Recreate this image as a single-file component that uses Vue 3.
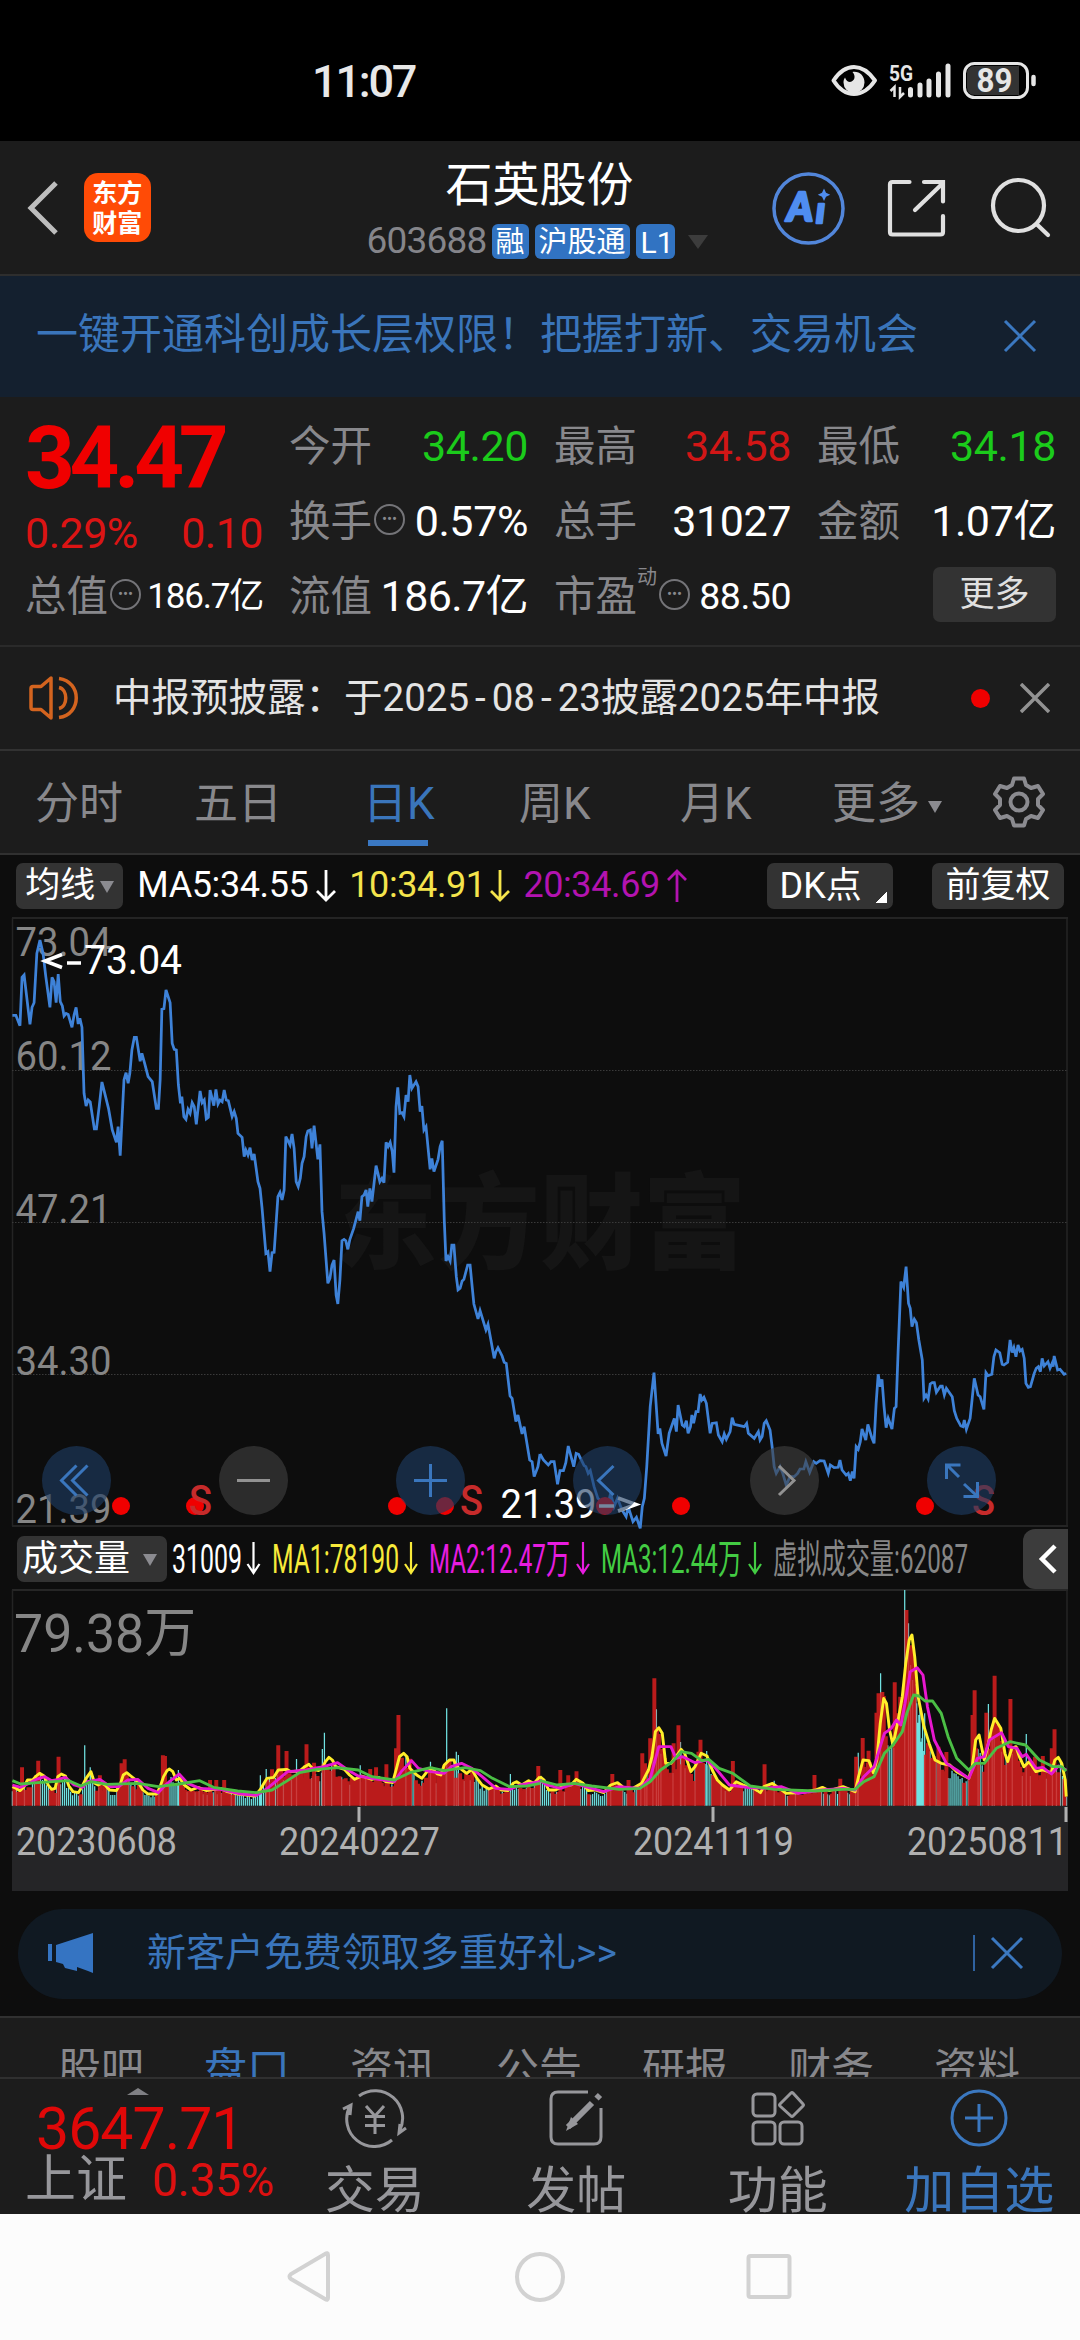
<script setup>
const quoteRows = [
  { label: '今开', value: '34.20', tone: 'down' },
  { label: '最高', value: '34.58', tone: 'up' },
  { label: '最低', value: '34.18', tone: 'down' },
  { label: '换手', value: '0.57%', info: true },
  { label: '总手', value: '31027' },
  { label: '金额', value: '1.07亿' },
]

const sections = ['股吧', '盘口', '资讯', '公告', '研报', '财务', '资料']

const priceLevels = [
  { text: '73.04', y: 956 },
  { text: '60.12', y: 1070 },
  { text: '47.21', y: 1223 },
  { text: '34.30', y: 1375 },
  { text: '21.39', y: 1523 },
]

const eventDots = [121, 195, 397, 445, 605, 681, 925]
const sellMarks = [189, 460, 972]

const volumeLegend = [
  { text: '31009', x: 172, w: 70, arrow: 253.5, color: '#ffffff' },
  { text: 'MA1:78190', x: 272, w: 127, arrow: 411, color: '#f8ea3a' },
  { text: 'MA2:12.47万', x: 429, w: 141, arrow: 583, color: '#e81ce0' },
  { text: 'MA3:12.44万', x: 601, w: 141, arrow: 755, color: '#43cc43' },
  { text: '虚拟成交量:62087', x: 773, w: 195, color: '#868686' },
]

const dates = [
  { text: '20230608', x: 16 },
  { text: '20240227', x: 279, tick: 359 },
  { text: '20241119', x: 633, tick: 713 },
  { text: '20250811', x: 907, tick: 1066 },
]

// The curves are stored as two halves on a 3136-unit wide grid.
const HALF = 1568
const priceLeft = '36,346 46,346 58,377 64,232 70,225 87,373 93,322 99,308 107,160 116,120 125,160 133,230 145,322 151,232 157,245 163,308 169,222 175,305 181,318 186,348 192,340 198,343 209,382 215,345 221,322 227,372 232,355 238,382 244,580 250,618 256,600 262,606 274,687 280,687 288,620 296,546 315,625 326,690 338,727 343,680 349,767 360,540 366,518 372,550 377,520 383,450 390,412 396,412 407,484 412,460 420,490 430,530 442,545 454,625 460,625 465,540 470,328 476,326 482,270 494,308 500,430 506,448 512,450 518,555 524,610 528,590 534,650 540,658 546,628 552,640 558,608 564,620 570,673 581,573 587,608 593,600 599,657 605,652 610,570 621,617 627,568 633,612 639,600 645,605 651,570 657,600 663,602 674,650 680,635 686,655 691,700 703,712 709,770 714,750 720,765 726,743 732,780 738,762 749,845 755,865 761,925 772,1060 778,1055 784,1115 790,1058 796,1057 807,890 813,877 819,900 825,870 830,710 842,735 848,702 854,745 860,845 866,860 872,835 877,790 883,770 889,710 894,693 901,690 906,745 912,677 923,778 929,733 935,935 941,1000 952,1150 958,1135 964,1095 970,1080 976,1185 981,1212 987,1140 993,1022 999,1018 1004,1022 1010,1048 1016,1018 1027,985 1040,935 1045,962 1051,890 1057,885 1063,870 1068,920 1074,865 1080,905 1092,797 1103,845 1109,835 1115,848 1121,727 1127,740 1133,727 1139,755 1144,818 1150,620 1155,562 1161,640 1167,638 1173,650 1179,585 1185,605 1190,525 1196,565 1208,545 1214,560 1220,635 1225,618 1231,690 1237,680 1249,808 1254,775 1260,815 1272,778 1278,740 1284,722 1290,960 1295,1083 1301,1070 1307,1083 1312,1035 1318,1035 1325,1130 1330,1170 1336,1165 1342,1143 1347,1138 1358,1095 1365,1095 1371,1160 1376,1212 1388,1257 1394,1232 1411,1290 1417,1273 1435,1375 1440,1355 1446,1343 1458,1368 1464,1387 1470,1390 1481,1488 1487,1495 1498,1565 1504,1545 1516,1602 1522,1580 1538,1680 1545,1685 1551,1730 1562,1700 1568,1662'
const priceRight = '0,522 10,540 24,555 32,545 41,545 51,613 58,572 68,572 75,548 82,498 98,560 105,520 112,523 128,557 133,560 140,580 146,572 157,620 168,655 182,668 196,680 205,640 215,680 225,655 238,690 250,710 256,680 270,725 280,712 291,745 297,680 303,655 310,560 320,380 331,278 343,462 348,445 354,490 366,528 375,460 390,415 396,455 401,375 413,435 419,440 425,422 430,460 437,440 441,405 446,430 453,395 459,395 465,342 470,360 476,352 483,370 494,460 500,430 512,428 518,465 529,485 535,462 541,478 552,455 558,413 564,433 580,437 593,440 600,430 605,460 622,475 634,455 639,480 645,470 651,430 657,422 668,450 674,500 680,560 686,580 697,560 705,580 715,615 726,590 738,590 748,580 755,567 766,567 772,545 783,577 795,545 802,550 813,542 825,543 837,580 843,555 854,563 866,562 871,540 877,570 889,585 895,580 901,602 907,575 912,595 918,500 924,508 930,485 935,447 946,480 952,433 964,475 970,490 976,370 982,283 988,320 993,298 999,380 1005,443 1011,415 1022,447 1029,385 1034,380 1040,210 1048,5 1056,22 1063,-40 1070,70 1075,85 1080,140 1087,118 1093,128 1100,180 1110,240 1115,355 1121,345 1127,357 1133,312 1139,308 1145,308 1151,337 1163,318 1168,318 1174,345 1180,325 1197,350 1203,392 1210,415 1222,438 1228,440 1232,420 1238,448 1249,415 1255,355 1261,295 1272,345 1278,350 1289,388 1295,278 1301,287 1312,283 1318,230 1324,210 1335,218 1342,253 1347,255 1358,247 1365,180 1371,218 1376,203 1382,230 1388,195 1394,213 1400,208 1406,235 1411,310 1418,322 1424,320 1435,280 1441,265 1447,260 1453,275 1458,235 1464,258 1475,245 1481,265 1487,250 1490,260 1493,228 1503,270 1510,268 1522,283 1528,280'

const ma1Left = '36,650 46,655 58,662 70,650 80,630 95,630 105,618 115,610 128,618 140,645 150,658 160,655 168,620 178,612 190,618 200,648 212,665 228,668 238,650 250,625 264,605 275,640 285,645 295,640 305,645 318,660 338,662 350,640 358,615 368,608 380,618 392,628 402,638 415,660 430,672 455,672 465,650 475,620 485,602 492,597 502,605 512,630 522,625 535,645 555,660 575,652 600,662 640,655 660,665 690,672 740,678 755,660 775,625 795,622 808,600 832,598 845,605 870,603 885,590 897,583 910,598 925,602 935,595 945,575 955,562 965,570 975,590 1000,598 1015,615 1030,628 1050,618 1080,628 1100,622 1120,635 1140,638 1150,600 1160,560 1172,550 1182,560 1190,595 1210,615 1225,625 1240,605 1255,595 1270,612 1280,615 1290,585 1305,570 1318,570 1325,590 1340,598 1355,610 1370,598 1385,625 1400,645 1420,657 1440,648 1455,660 1475,662 1490,640 1500,635 1515,645 1535,632 1550,640 1568,620'
const ma1Right = '0,620 12,630 25,660 45,660 75,645 90,645 105,628 125,640 140,662 160,660 185,668 205,645 225,638 245,655 270,655 295,640 315,600 325,560 335,485 345,473 355,490 365,580 380,580 395,560 410,538 420,550 438,605 450,590 468,550 485,558 500,600 515,630 530,645 550,660 570,635 590,645 620,655 640,668 650,650 675,640 695,655 715,670 760,668 800,660 820,652 840,662 880,650 915,665 925,620 938,570 955,572 968,608 978,570 988,460 998,385 1006,400 1015,480 1025,525 1040,450 1052,380 1062,280 1072,210 1080,195 1088,260 1098,380 1115,470 1130,520 1147,570 1165,580 1190,585 1210,605 1245,625 1255,590 1265,510 1275,495 1282,530 1290,570 1300,530 1310,480 1320,445 1338,475 1350,550 1358,575 1370,535 1382,530 1392,560 1405,590 1420,575 1440,605 1460,600 1485,608 1495,570 1505,562 1515,580 1525,630 1528,680'
const ma2Left = '36,645 60,652 85,640 105,628 130,620 150,632 170,628 190,622 215,645 240,652 255,635 290,628 320,650 345,650 370,630 400,628 430,655 460,668 480,645 520,612 545,640 580,655 640,658 700,672 745,676 770,660 800,635 835,605 860,603 890,600 910,595 940,590 980,578 1010,600 1040,618 1080,625 1145,635 1165,605 1195,572 1215,595 1250,605 1290,610 1310,590 1340,580 1370,595 1400,620 1440,655 1480,658 1510,645 1568,635'
const ma2Right = '0,630 20,645 60,655 100,640 140,652 185,665 230,650 290,655 320,625 345,530 380,530 395,565 415,560 450,578 485,570 510,595 550,645 600,652 650,655 700,650 750,670 820,660 880,655 915,660 940,620 970,590 1000,490 1020,475 1035,450 1048,465 1060,400 1075,305 1095,293 1112,315 1125,410 1145,510 1180,580 1210,600 1245,625 1270,565 1290,560 1305,510 1340,488 1360,530 1385,535 1400,560 1412,553 1440,595 1460,592 1485,612 1505,588 1528,600'
const ma3Left = '36,632 60,642 110,638 200,632 235,648 265,635 310,643 400,640 460,650 520,642 580,632 620,652 690,663 745,668 790,660 830,635 870,608 920,598 980,593 1040,600 1080,620 1145,630 1190,608 1250,593 1290,602 1350,593 1395,602 1430,625 1480,650 1530,648 1568,640'
const ma3Right = '0,632 50,645 100,640 150,648 230,658 290,655 320,635 350,600 385,575 410,545 440,550 470,572 490,568 520,595 560,610 610,648 680,658 800,663 880,658 915,658 940,635 970,620 1000,550 1025,525 1052,485 1065,430 1085,375 1100,378 1118,393 1140,393 1165,430 1185,500 1210,565 1245,600 1265,580 1290,580 1325,535 1365,515 1410,525 1450,570 1490,590 1515,590 1528,603'

const averages = [
  { left: ma1Left, right: ma1Right, color: '#ffee2a' },
  { left: ma2Left, right: ma2Right, color: '#e817d0' },
  { left: ma3Left, right: ma3Right, color: '#4bbf45' },
]

// Outstanding volume days: x position -> top of the bar.
const redPeaks = [
  [64, 592], [111, 572], [170, 560], [353, 580], [362, 568], [473, 556], [479, 558], [290, 616], [610, 630], [628, 630], [651, 630],
  [790, 598], [808, 526], [832, 543], [890, 523], [912, 578], [1075, 597], [1092, 592], [1122, 583], [1150, 535], [1157, 435], [1190, 566],
  [1305, 572], [1563, 588], [1627, 600], [1650, 616], [1674, 604], [1778, 612], [1825, 630], [1865, 550], [1873, 580], [1888, 505], [1900, 325], [1918, 560], [1956, 520],
  [1970, 466], [2034, 509], [2028, 545], [2128, 573], [2220, 583], [2365, 615], [2440, 626], [2486, 560], [2505, 504], [2522, 542],
  [2545, 428], [2551, 370], [2562, 366], [2598, 337], [2614, 380], [2606, 430], [2632, 120], [2655, 348], [2725, 530], [2748, 546],
  [2824, 435], [2830, 361], [2864, 428], [2888, 317], [2880, 480], [2898, 470], [2934, 387], [3005, 560], [3028, 558], [3062, 478], [3054, 535],
]
const cyanPeaks = [
  [246, 526], [262, 592], [518, 600], [756, 616], [773, 597], [861, 567], [936, 537], [942, 488], [1046, 586], [1250, 575],
  [1297, 415], [1325, 545], [1331, 555], [1482, 612], [1906, 418], [1912, 545], [1976, 516], [2052, 543], [2248, 632], [2492, 548], [2557, 310],
  [2627, 60], [2638, 160], [2644, 285], [2650, 330], [2662, 400], [2668, 435], [2674, 515], [2679, 460], [2685, 430], [2840, 538], [2870, 402],
  [2908, 545], [2980, 492],
]
const cyanRuns = [
  [120, 142], [175, 210], [238, 280], [305, 335], [415, 452], [487, 525], [697, 772], [1372, 1410], [1480, 1510],
  [1568, 1590], [1683, 1708], [1718, 1763], [1803, 1818], [2050, 2066], [2158, 2188], [2660, 2686], [2758, 2793], [2846, 2856],
]

const parse = (text) => text.split(' ').map((p) => p.split(',').map(Number))
const trend = [...parse(ma1Left), ...parse(ma1Right).map(([x, y]) => [x + HALF, y])]

function trendAt(x) {
  const i = trend.findIndex((p) => p[0] > x)
  if (i < 1) return trend[trend.length - 1][1]
  const [x0, y0] = trend[i - 1]
  const [x1, y1] = trend[i]
  return y0 + ((y1 - y0) * (x - x0)) / (x1 - x0 || 1)
}

function buildBars() {
  const red = []
  const cyan = []
  let seed = 17
  const next = () => (seed = (seed * 16807) % 2147483647) / 2147483647
  for (let i = 0; i < 526; i++) {
    const x = 36 + i * 5.83
    const isCyan = cyanRuns.some(([a, b]) => x >= a && x <= b) || next() < 0.3
    const top = 707 - (707 - trendAt(x)) * (0.66 + next() * 0.38)
    if (isCyan) cyan.push([x, top])
    else red.push([x, top])
  }
  const toPath = (list) => list.map(([x, y]) => `M${x.toFixed(1)} 707V${y.toFixed(0)}`).join('')
  return { red: toPath([...red, ...redPeaks]), cyan: toPath([...cyan, ...cyanPeaks]) }
}

const bars = buildBars()
</script>

<template>
  <main class="phone">
    <header class="status">
      <span class="clock">11:07</span>
      <svg class="status-icons" width="210" height="42" viewBox="828 60 210 42">
        <path d="M833.500 80.500Q842.500 67 854 67T875 80.500Q866 94 854 94T833.500 80.500Z" fill="none" stroke="#e6e6e6" stroke-width="4" stroke-linejoin="round" />
        <path d="M852.500 72c7-1 12 4 12 10.500a10.500 10.500 0 0 1-21 0c0-2 .5-3.500 1.500-5 1 3 3 4.500 5 4.500 5-1 6-6 2.500-10z" fill="#e6e6e6" />
        <text x="889" y="80.500" font-size="22" font-weight="700" textLength="24" lengthAdjust="spacingAndGlyphs" fill="#e6e6e6">5G</text>
        <path d="M894.500 97V87l-4 4M900 87v10l4-4" fill="none" stroke="#e6e6e6" stroke-width="2.500" />
        <path d="M910.500 95V89.500M920 95V85M929 95V81M938.500 95V74M948 95V66" stroke="#e6e6e6" stroke-width="5" stroke-linecap="round" />
        <rect x="964.500" y="63.500" width="63" height="34" rx="10" fill="none" stroke="#e6e6e6" stroke-width="3" />
        <path d="M975 66h44v29h-44q-8 0-8-8V74q0-8 8-8z" fill="#333" />
        <path d="M1033.500 77v7" stroke="#e6e6e6" stroke-width="4.500" stroke-linecap="round" />
        <text x="976.500" y="92" font-size="33" font-weight="700" textLength="36" lengthAdjust="spacingAndGlyphs" fill="#e6e6e6">89</text>
      </svg>
    </header>

    <section class="titlebar">
      <svg class="back" width="36" height="58" viewBox="0 0 36 58"><path d="M31 4 6 29l25 25" fill="none" stroke="#bdbdbd" stroke-width="5" /></svg>
      <div class="logo"><span>东方</span><span>财富</span></div>
      <div class="stock">
        <h1>石英股份</h1>
        <div class="codes">
          <span class="code">603688</span>
          <span class="tag">融</span><span class="tag">沪股通</span><span class="tag l1">L1</span>
          <i class="caret dim"></i>
        </div>
      </div>
      <svg class="tools" width="284" height="80" viewBox="768 168 284 80" fill="none">
        <circle cx="808.500" cy="208.500" r="34.500" stroke="#5286da" stroke-width="3.500" />
        <g fill="#4f8df0" stroke="#4f8df0" stroke-width="2.500" stroke-linejoin="round" font-family="Lato" font-weight="900" font-style="italic">
          <text x="787" y="221" font-size="40" textLength="26" lengthAdjust="spacingAndGlyphs">A</text>
          <text x="816" y="222.500" font-size="36">ı</text>
          <path d="m824 188.500 2 4.200 4.200 2-4.200 2-2 4.300-2-4.300-4.200-2 4.200-2z" stroke="none" />
        </g>
        <path d="M909.500 182H892.500q-2.500 0-2.500 2.500V232q0 2.500 2.500 2.500h48q2.500 0 2.500-2.500V216M915 210l27-26M924 182h19v19.500" stroke="#e0e0e0" stroke-width="4.200" stroke-linecap="round" />
        <circle cx="1018.500" cy="205.500" r="25.500" stroke="#e0e0e0" stroke-width="4.200" />
        <path d="m1036.500 224 11.500 11" stroke="#e0e0e0" stroke-width="4.200" stroke-linecap="round" />
      </svg>
    </section>

    <section class="banner">
      <span>一键开通科创成长层权限！把握打新、交易机会</span>
      <svg width="34" height="34" viewBox="0 0 34 34"><path d="m2 2 30 30M32 2 2 32" stroke="#3b78c0" stroke-width="3" /></svg>
    </section>

    <section class="quote">
      <div class="headline">
        <strong>34.47</strong>
        <p><span>0.29%</span><span>0.10</span></p>
      </div>
      <div v-for="row in quoteRows" :key="row.label" class="cell">
        <label>{{ row.label }}</label>
        <i v-if="row.info" class="info">•••</i>
        <b :class="row.tone">{{ row.value }}</b>
      </div>
      <div class="cell">
        <label>总值</label><i class="info">•••</i><b class="small">186.7亿</b>
      </div>
      <div class="cell"><label>流值</label><b class="tight">186.7亿</b></div>
      <div class="cell">
        <label>市盈</label><sup>动</sup><i class="info">•••</i><b class="ratio">88.50</b>
      </div>
      <div class="cell end"><button>更多</button></div>
    </section>

    <section class="notice">
      <svg width="52" height="46" viewBox="0 0 52 46" fill="none" stroke="#d4641f" stroke-width="3.500">
        <path d="M2 13.500q0-2 2-2h8L22 3v40L12 34.500H4q-2 0-2-2z" stroke-linejoin="round" />
        <path d="M30 12.500c9 2 9 19 0 21M30 3.500c23 3 23 36 0 39" />
      </svg>
      <p>中报预披露：于2025<i>-</i>08<i>-</i>23披露2025年中报</p>
      <span class="dot"></span>
      <svg width="30" height="30" viewBox="0 0 30 30"><path d="m1 1 28 28M29 1 1 29" stroke="#929292" stroke-width="3.500" /></svg>
    </section>

    <nav class="periods">
      <a>分时</a>
      <a>五日</a>
      <a class="active">日K</a>
      <a>周K</a>
      <a>月K</a>
      <a>更多<i class="caret small-caret"></i></a>
      <svg width="54" height="54" viewBox="-27 -27 54 54" fill="none" stroke="#8b8b90" stroke-width="4" stroke-linejoin="round">
        <path d="M-5-23.500H5L7-17 12-14 19-16 24-8 19-3V3L24 8 19 16 12 14 7 17 5 23.500H-5L-7 17-12 14-19 16-24 8-19 3V-3L-24-8-19-16-12-14-7-17Z" />
        <circle r="8.500" />
      </svg>
    </nav>

    <section class="mabar">
      <button class="avg">均线<i class="caret small-caret"></i></button>
      <span class="ma white">MA5:34.55</span><svg class="arrow" width="22" height="34" viewBox="-11 0 22 34"><path d="M0 1v30M-9 22l9 9 9-9" stroke="#fff" /></svg>
      <span class="ma yellow">10:34.91</span><svg class="arrow" width="22" height="34" viewBox="-11 0 22 34"><path d="M0 1v30M-9 22l9 9 9-9" stroke="#f4e44c" /></svg>
      <span class="ma purple">20:34.69</span><svg class="arrow" width="22" height="34" viewBox="-11 0 22 34"><path d="M0 33V2M-9 11l9-9 9 9" stroke="#b313b0" /></svg>
      <button class="dk">DK点<i class="corner"></i></button>
      <button class="adj">前复权</button>
    </section>

    <svg class="chart" width="1080" height="612" viewBox="0 917 1080 612" fill="none">
      <g font-family="'Noto Sans CJK SC'" font-weight="900" font-size="104" fill="#151515">
        <text x="334" y="1261" textLength="412" lengthAdjust="spacingAndGlyphs">东方财富</text>
      </g>
      <path d="M12.500 918V1526M1067 918V1526" stroke="#242424" stroke-width="1.500" />
      <path d="M12 918H1068M12 1526H1068" stroke="#242424" stroke-width="2" />
      <path d="M12 1070.500H1067M12 1222.500H1067M12 1374.500H1067" stroke="#3a3a3a" stroke-width="1" stroke-dasharray="1.500 1.500" />
      <g fill="#868686" font-size="40">
        <text v-for="l in priceLevels" :key="l.text" x="15.500" :y="l.y" textLength="96" lengthAdjust="spacingAndGlyphs">{{ l.text }}</text>
      </g>
      <g transform="translate(0 900) scale(.34439 .33333)" stroke="#3e82d8" stroke-width="8" stroke-linejoin="miter">
        <polyline :points="priceLeft" />
        <polyline :points="priceRight" transform="translate(1568 1140)" />
      </g>
      <g fill="#fff" font-size="40">
        <path d="M62 954.500 45 961l17 6.500M67 963h14" fill="none" stroke="#fff" stroke-width="3.500" />
        <text x="84" y="974" textLength="98" lengthAdjust="spacingAndGlyphs">73.04</text>
        <text x="500.500" y="1518" textLength="96" lengthAdjust="spacingAndGlyphs">21.39</text>
      </g>
      <circle v-for="x in eventDots" :key="x" :cx="x" cy="1506" r="9" fill="#f00000" />
      <path d="M599 1506h15M618 1498l18 6.500-18 6.500" stroke="#fff" stroke-width="3.500" />
      <g fill="#c62b2b" font-size="42" font-weight="500">
        <text v-for="x in sellMarks" :key="x" :x="x" y="1515" textLength="23" lengthAdjust="spacingAndGlyphs">S</text>
      </g>
      <g fill="#1e3d64" fill-opacity=".62">
        <circle v-for="x in [76.5, 430.5, 607.5, 961.5]" :key="x" :cx="x" cy="1480.500" r="34.500" />
        <circle v-for="x in [253.5, 784.5]" :key="x" :cx="x" cy="1480.500" r="34.500" fill="#414141" />
      </g>
      <g stroke="#3a76bd" stroke-width="3">
        <path d="M76.500 1465.500l-15 15 15 15M87.500 1465.500l-15 15 15 15" />
        <path d="M414 1480.500h33M430.500 1464v33" />
        <path d="M613.500 1466l-15 14.500 15 14.500" />
        <path d="M959 1477l-12-12M946.500 1479v-14h14M964 1484l13 12M977.500 1482v14.500h-14" />
      </g>
      <path d="M237 1480.500h33M779 1466l15 14.500-15 14.500" stroke="#929292" stroke-width="3" />
    </svg>

    <section class="volbar">
      <button>成交量<i class="caret small-caret"></i></button>
      <svg width="850" height="46" viewBox="170 1535 850 46">
        <g v-for="v in volumeLegend" :key="v.text" :fill="v.color">
          <text :x="v.x" y="1572" font-size="40" :textLength="v.w" lengthAdjust="spacingAndGlyphs">{{ v.text }}</text>
          <path v-if="v.arrow" :d="`M${v.arrow} 1541v31m-6-9l6 9 6-9`" fill="none" :stroke="v.color" stroke-width="2.200" />
        </g>
      </svg>
      <button class="fold"><svg width="20" height="32" viewBox="0 0 20 32"><path d="M17 3 4 16l13 13" fill="none" stroke="#fff" stroke-width="4.500" /></svg></button>
    </section>

    <svg class="volume" width="1080" height="302" viewBox="0 1589 1080 302" fill="none">
      <path d="M12 1590H1068" stroke="#262626" stroke-width="2" />
      <path d="M12.500 1590V1806M1067 1590V1806" stroke="#242424" stroke-width="1.500" />
      <text x="14" y="1652" font-size="54" fill="#868686" textLength="182" lengthAdjust="spacingAndGlyphs">79.38万</text>
      <g transform="translate(0 1570) scale(.34439 .33333)">
        <path :d="bars.cyan" stroke="#70e2e2" stroke-width="3.600" />
        <path :d="bars.red" stroke="#d91e1e" stroke-opacity=".85" stroke-width="11.500" />
        <g v-for="m in averages" :key="m.color" :stroke="m.color" stroke-width="8.500" stroke-linejoin="round">
          <polyline :points="m.left" />
          <polyline :points="m.right" transform="translate(1568 0)" />
        </g>
      </g>
      <rect x="12" y="1806" width="1056" height="85" fill="#252527" />
      <g v-for="d in dates" :key="d.text" fill="#b0b0b0" font-size="38">
        <text :x="d.x" y="1855" textLength="161" lengthAdjust="spacingAndGlyphs">{{ d.text }}</text>
        <rect v-if="d.tick" :x="d.tick - 1.5" y="1807" width="3" height="15" />
      </g>
    </svg>

    <section class="promo">
      <svg width="46" height="42" viewBox="0 0 46 42" fill="#3574c2"><path d="M0 12h4v17H0zM8 13 45 1v40l-5-2-11-4v4l-12-3-2-4-7-2z" /></svg>
      <span>新客户免费领取多重好礼&gt;&gt;</span>
      <i></i>
      <svg width="34" height="34" viewBox="0 0 34 34"><path d="m2 2 30 30M32 2 2 32" stroke="#3b78c0" stroke-width="3" /></svg>
    </section>

    <nav class="sections">
      <a v-for="s in sections" :key="s" :class="{ active: s === '盘口' }">{{ s }}</a>
    </nav>

    <footer class="dock">
      <div class="index">
        <i class="up-caret"></i>
        <strong>3647.71</strong>
        <p><span>上证</span><b>0.35%</b></p>
      </div>
      <a>
        <svg width="66" height="60" viewBox="-33 -30 66 60" fill="none" stroke="#97979b" stroke-width="3">
          <path d="M-16-22A27.500 27.500 0 0 1 24.500 13M17 22A27.500 27.500 0 0 1-25-12M-32-9l8-4-1 10M31 10l-7 5 1-9" />
          <path d="M-9-12 0-2 9-12M0-2v18M-10-1.500h20M-10 7.500h20" />
        </svg>
        <span>交易</span>
      </a>
      <a>
        <svg width="60" height="60" viewBox="-30 -30 60 60" fill="none" stroke="#97979b" stroke-width="3">
          <path d="M12-26H-18q-7 0-7 7V19q0 7 7 7H18q7 0 7-7V-10" />
          <path d="M16-15-8 9M20.500-19.500l3.500-3.500" stroke-width="6" />
          <path d="M-5-1-10 13 2 6Z" fill="#97979b" stroke="none" />
        </svg>
        <span>发帖</span>
      </a>
      <a>
        <svg width="60" height="60" viewBox="-30 -30 60 60" fill="none" stroke="#97979b" stroke-width="3">
          <rect x="-25" y="-24" width="22" height="22" rx="4" /><rect x="-25" y="4" width="22" height="22" rx="4" /><rect x="2" y="4" width="22" height="22" rx="4" />
          <path d="M13-25q1-1 2 0L25-14q1 1 0 2L15-2q-1 1-2 0L2-12q-1-1 0-2z" />
        </svg>
        <span>功能</span>
      </a>
      <a class="active">
        <svg width="60" height="60" viewBox="-30 -30 60 60" fill="none" stroke="#3b78c0" stroke-width="3">
          <circle r="27" /><path d="M-14 0h28M0-14v28" />
        </svg>
        <span>加自选</span>
      </a>
    </footer>

    <div class="sysnav">
      <svg width="506" height="54" viewBox="287 2250 506 54" fill="none" stroke="#d2d2d2" stroke-width="4">
        <path d="M328 2255v43q0 3-3 1l-34-20q-3-2 0-5l34-20q3-2 3 1z" />
        <circle cx="540" cy="2277" r="23" />
        <rect x="748.500" y="2256" width="41" height="41" rx="2" />
      </svg>
    </div>
  </main>
</template>

<style>
body {
  margin: 0;
  background: #0d0d0d;
}
</style>

<style scoped>
* {
  box-sizing: border-box;
}
.phone {
  width: 1080px;
  height: 2340px;
  overflow: hidden;
  display: flex;
  flex-direction: column;
  background: #0d0d0d;
  color: #fff;
  font-family: Roboto, 'Noto Sans CJK SC', sans-serif;
  line-height: 1.2;
  white-space: nowrap;
}
.phone > * {
  flex: none;
}
svg {
  display: block;
  flex: none;
}
h1,
p {
  margin: 0;
  font-weight: 400;
}
i,
b {
  font-style: normal;
  font-weight: 400;
}
button {
  border: 0;
  padding: 0;
  color: #fff;
  background: #333;
  border-radius: 7px;
  font: inherit;
}
.status {
  height: 141px;
  background: #000;
  display: flex;
  padding: 60px 42px 0 312px;
  justify-content: space-between;
}
.clock {
  font-size: 45px;
  line-height: 43px;
  font-weight: 500;
  letter-spacing: -2.2px;
  color: #e8e8e8;
}
.titlebar {
  height: 135px;
  background: #1c1c1c;
  border-bottom: 2px solid #2e2e2e;
  display: flex;
  align-items: center;
  padding: 0 28px 0 25px;
}
.logo {
  width: 67px;
  height: 69px;
  margin-left: 23px;
  padding-bottom: 4px;
  border-radius: 14px;
  background: #ff4b06;
  display: flex;
  flex-direction: column;
  align-items: center;
  justify-content: center;
  font: 700 25px/30px 'Noto Sans CJK SC', sans-serif;
}
.stock {
  margin-left: 217px;
  width: 345px;
  height: 134px;
}
h1 {
  font-size: 47px;
  line-height: 60px;
  margin: 14px 0 0 78px;
}
.codes {
  display: flex;
  align-items: center;
  height: 36px;
  margin-top: 9px;
}
.code {
  margin-left: -1px;
  font-size: 37px;
  letter-spacing: -0.8px;
  color: #85858a;
  width: 125px;
}
.tag {
  height: 35px;
  padding: 0 4px;
  margin-right: 6px;
  border-radius: 6px;
  background: #3173c2;
  font-size: 29px;
  line-height: 37px;
}
.l1 {
  width: 39px;
  padding: 0 5px;
  font-size: 30px;
}
.caret {
  display: inline-block;
  border: 10px solid transparent;
  border-top: 14px solid #8b8b90;
  border-bottom: 0;
}
.dim {
  margin-left: 7px;
  border-top-color: #3c3c3c;
}
.small-caret {
  border-width: 12px 7.500px 0;
}
.tools {
  margin-left: 58px;
}
.banner {
  height: 121px;
  background: #14202f;
  color: #3a75bb;
  display: flex;
  align-items: center;
  justify-content: space-between;
  padding: 0 43px 2px 36px;
  font-size: 42px;
}
.quote {
  height: 250px;
  background: #1c1c1c;
  border-bottom: 2px solid #2a2a2a;
  padding: 12px 24px 0 25px;
  display: grid;
  grid-template-columns: 238px 239px 237px 239px;
  grid-template-rows: 75px 75px 75px;
  column-gap: 26px;
}
.headline {
  grid-row: span 2;
  color: #f00000;
}
.headline strong {
  display: block;
  font-size: 87px;
  line-height: 98px;
  letter-spacing: -5.300px;
}
.headline p {
  display: flex;
  justify-content: space-between;
  color: #dc1414;
  font-size: 43px;
  line-height: 52px;
}
.headline p span {
  letter-spacing: -0.5px;
}
.cell {
  display: flex;
  align-items: center;
}
.cell label {
  font-size: 41.500px;
  color: #88888c;
}
.cell b {
  margin-left: auto;
  font-size: 43px;
  letter-spacing: -0.4px;
}
.cell .down {
  color: #1bcb1b;
}
.cell .up {
  color: #d21616;
}
.cell .small {
  font-size: 35px;
  letter-spacing: -1.200px;
}
.cell .tight {
  letter-spacing: -0.6px;
}
.cell .ratio {
  font-size: 37.500px;
  letter-spacing: -0.5px;
}
.info {
  width: 31px;
  height: 31px;
  margin: -5px 0 0 2px;
  border: 2.500px solid #747478;
  border-radius: 50%;
  color: #88888c;
  font-size: 15px;
  line-height: 27px;
  display: flex;
  justify-content: center;
}
sup {
  font-size: 20px;
  line-height: 20px;
  margin: -40px 0 0 0;
  color: #88888c;
}
.end button {
  width: 123px;
  height: 55px;
  margin: -4px 0 0 auto;
  font-size: 35px;
  color: #e0e0e0;
}
.notice {
  height: 104px;
  background: #1c1c1c;
  border-bottom: 2px solid #323232;
  display: flex;
  align-items: center;
  padding: 0 30px 0 29px;
}
.notice p {
  width: 858px;
  margin-left: 32px;
  font-size: 38.500px;
  color: #e4e4e4;
}
.notice p i {
  padding: 0 6px;
}
.dot {
  width: 19px;
  height: 19px;
  margin-right: 30px;
  border-radius: 50%;
  background: #f00000;
}
.periods {
  height: 104px;
  background: #1c1c1c;
  border-bottom: 2px solid #303030;
  display: grid;
  grid-template-columns: 159px 169px 156px 161px 152px 160px 54px;
  padding-left: 35px;
  align-items: center;
  color: #88888c;
  font-size: 44px;
  line-height: 107px;
}
.periods a {
  height: 102px;
}
.periods .active {
  color: #3a75bb;
  background: linear-gradient(#3a78c3, #3a78c3) 5px 89px / 60px 6px no-repeat;
}
.periods .small-caret {
  margin-left: 8px;
  vertical-align: 6px;
}
.mabar {
  height: 62px;
  display: flex;
  align-items: center;
  padding: 0 16px;
  font-size: 36px;
}
.mabar button {
  height: 46px;
  line-height: 46px;
  font-size: 35px;
}
.avg {
  width: 108px;
  margin-right: 14px;
}
.avg .small-caret {
  margin-left: 5px;
  vertical-align: 4px;
}
.ma {
  letter-spacing: -0.4px;
  width: 179px;
}
.yellow {
  width: 141px;
  color: #f4e44c;
}
.purple {
  width: 143px;
  color: #b313b0;
}
.arrow {
  margin-right: 12px;
  fill: none;
  stroke-width: 2.800px;
}
.mabar .dk {
  width: 127px;
  margin-left: 67px;
  font-size: 36px;
  display: flex;
  padding-left: 13px;
}
.corner {
  width: 12px;
  height: 12px;
  margin: 28px 6px 0 auto;
  background: linear-gradient(135deg, transparent 50%, #fff 50%);
}
.mabar .adj {
  width: 133px;
  margin-left: 39px;
}
.volbar {
  height: 60px;
  display: flex;
  align-items: center;
  padding-left: 17px;
}
.volbar button {
  width: 150px;
  height: 46px;
  padding-left: 5px;
  font-size: 36px;
  line-height: 44px;
  text-align: left;
  margin-right: 3px;
}
.volbar .small-caret {
  margin-left: 13px;
  vertical-align: 5px;
}
.volbar .fold {
  width: 45px;
  height: 60px;
  margin: 0 0 0 3px;
  padding-left: 15px;
  border-radius: 12px 0 0 12px;
  background: #3c3c3c;
}
.promo {
  height: 90px;
  margin: 18px 18px 17px;
  border-radius: 45px;
  background: #101922;
  display: flex;
  align-items: center;
  padding: 0 38px 2px 30px;
  color: #3a75bb;
  font-size: 39px;
}
.promo span {
  margin: 0 auto 0 53px;
}
.promo i {
  width: 2px;
  height: 36px;
  margin-right: 15px;
  background: #2f62a0;
}
.sections {
  height: 63px;
  background: #1c1c1c;
  border-top: 2px solid #303030;
  border-bottom: 2px solid #303030;
  overflow: hidden;
  display: flex;
  padding-left: 58px;
  color: #88888c;
  font-size: 43px;
  line-height: 103px;
}
.sections a {
  width: 146.200px;
}
.active {
  color: #3a75bb;
}
.dock {
  height: 135px;
  background: #1c1c1c;
  display: flex;
  overflow: hidden;
  color: #97979b;
}
.dock a {
  width: 202px;
  display: flex;
  flex-direction: column;
  align-items: center;
  padding-top: 9px;
  font-size: 50px;
}
.dock a span {
  line-height: 60px;
  margin-top: 13px;
}
.dock .active {
  color: #3a75bb;
}
.index {
  width: 274px;
  padding-left: 25px;
}
.up-caret {
  display: block;
  width: 0;
  margin: 9px 0 0 102px;
  border: 11px solid transparent;
  border-bottom: 7px solid #808084;
  border-top: 0;
}
.index strong {
  display: block;
  font-size: 59px;
  line-height: 60px;
  font-weight: 400;
  color: #e00808;
  letter-spacing: -1px;
  margin: 4px 0 0 11px;
}
.index p {
  display: flex;
  font-size: 51px;
  line-height: 50px;
  align-items: center;
  margin-top: -4px;
}
.index b {
  margin-left: 25px;
  font-size: 46px;
  color: #dc1010;
  letter-spacing: -0.3px;
}
.sysnav {
  height: 126px;
  background: #fcfcfc;
  display: flex;
  justify-content: center;
  align-items: center;
}
</style>
